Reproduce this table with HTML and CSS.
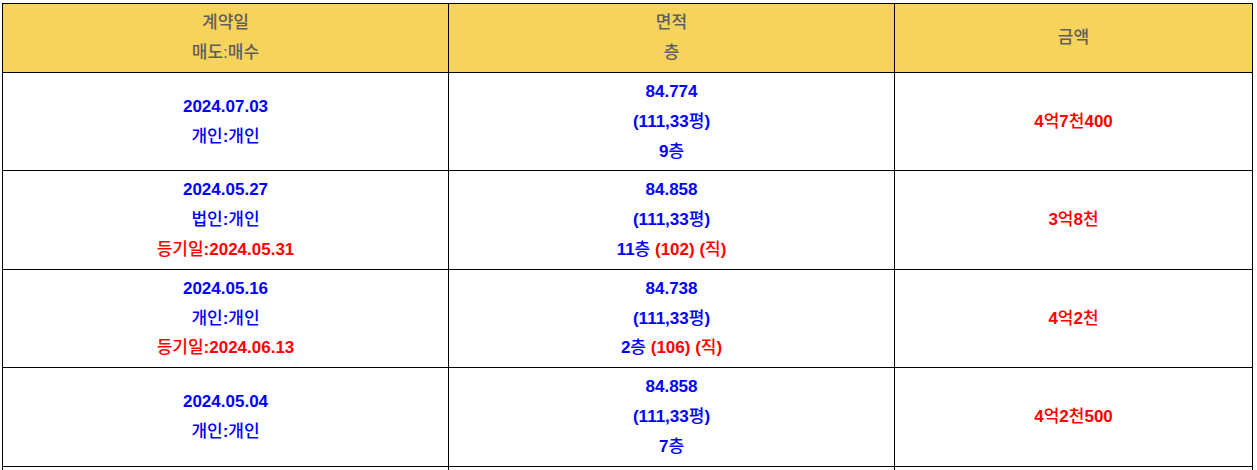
FILE: index.html
```html
<!DOCTYPE html>
<html lang="ko">
<head>
<meta charset="utf-8">
<title>실거래가</title>
<link rel="stylesheet" href="styles.css">
</head>
<body>
<div class="wrap">
<table class="deals">
  <colgroup>
    <col class="c1"><col class="c2"><col class="c3">
  </colgroup>
  <thead>
    <tr>
      <th>계약일<br>매도:매수</th>
      <th>면적<br>층</th>
      <th>금액</th>
    </tr>
  </thead>
  <tbody>
    <tr>
      <td class="blue">2024.07.03<br><span class="ko">개인</span>:<span class="ko">개인</span></td>
      <td class="blue">84.774<br>(111,33<span class="ko">평</span>)<br>9<span class="ko">층</span></td>
      <td class="red">4<span class="ko">억</span>7<span class="ko">천</span>400</td>
    </tr>
    <tr>
      <td class="blue">2024.05.27<br><span class="ko">법인</span>:<span class="ko">개인</span><br><span class="red"><span class="ko">등기일</span>:2024.05.31</span></td>
      <td class="blue">84.858<br>(111,33<span class="ko">평</span>)<br>11<span class="ko">층</span> <span class="red">(102) (<span class="ko">직</span>)</span></td>
      <td class="red">3<span class="ko">억</span>8<span class="ko">천</span></td>
    </tr>
    <tr>
      <td class="blue">2024.05.16<br><span class="ko">개인</span>:<span class="ko">개인</span><br><span class="red"><span class="ko">등기일</span>:2024.06.13</span></td>
      <td class="blue">84.738<br>(111,33<span class="ko">평</span>)<br>2<span class="ko">층</span> <span class="red">(106) (<span class="ko">직</span>)</span></td>
      <td class="red">4<span class="ko">억</span>2<span class="ko">천</span></td>
    </tr>
    <tr>
      <td class="blue">2024.05.04<br><span class="ko">개인</span>:<span class="ko">개인</span></td>
      <td class="blue">84.858<br>(111,33<span class="ko">평</span>)<br>7<span class="ko">층</span></td>
      <td class="red">4<span class="ko">억</span>2<span class="ko">천</span>500</td>
    </tr>
    <tr>
      <td class="blue">2024.04.20<br><span class="ko">개인</span>:<span class="ko">개인</span></td>
      <td class="blue">84.774<br>(111,33<span class="ko">평</span>)<br>5<span class="ko">층</span></td>
      <td class="red">4<span class="ko">억</span>3<span class="ko">천</span></td>
    </tr>
  </tbody>
</table>
</div>
</body>
</html>
```
FILE: styles.css
```css
html, body {
  margin: 0;
  padding: 0;
  background: #ffffff;
}

.wrap {
  padding: 3px 0 0 2px;
}

.deals {
  width: 1250px;
  border-collapse: collapse;
  table-layout: fixed;
  font-family: "Liberation Sans", "Noto Sans CJK KR", sans-serif;
  font-size: 17px;
  line-height: 29.8px;
  text-align: center;
}

.c1 { width: 446px; }
.c2 { width: 446px; }
.c3 { width: 358px; }

.deals th,
.deals td {
  border: 1px solid #000000;
  padding: 4px 2px;
  vertical-align: middle;
}

.deals th {
  background: #f6d35a;
  color: #5f5f5f;
  font-weight: 500;
  line-height: 30px;
}

.deals td {
  font-weight: bold;
}

.blue { color: #0000ff; }
.red { color: #ff0000; }

.ko {
  font-weight: 500;
}
```
